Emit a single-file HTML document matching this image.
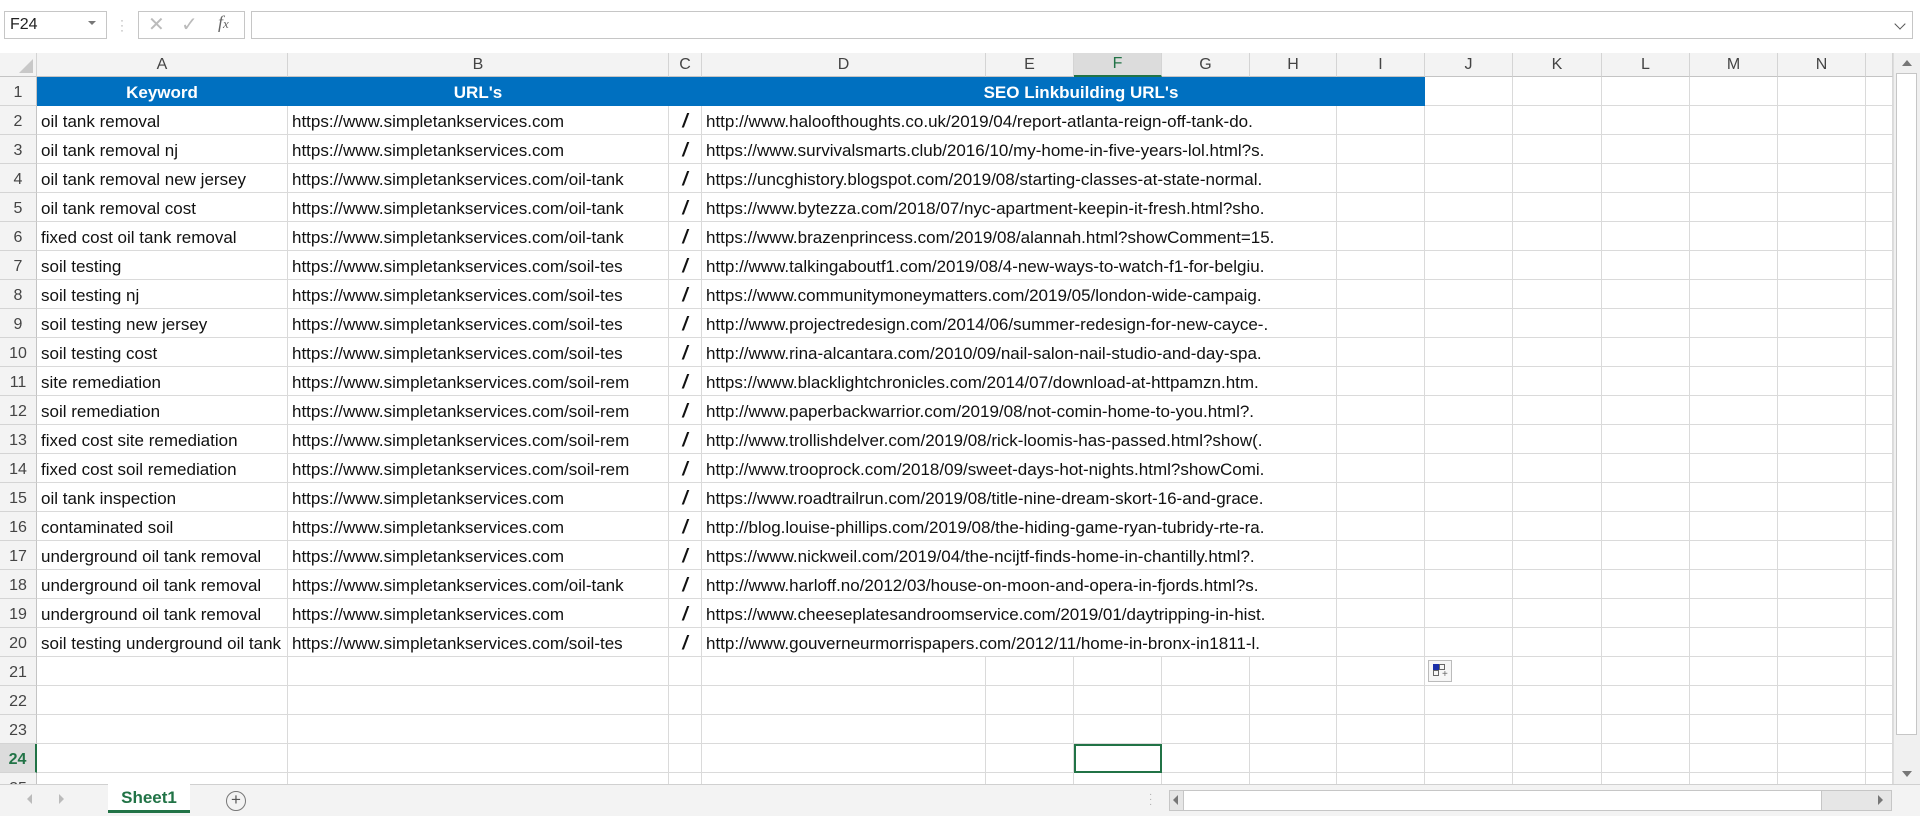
<!DOCTYPE html>
<html><head><meta charset="utf-8"><style>
*{box-sizing:border-box;margin:0;padding:0}
body{width:1920px;height:816px;overflow:hidden;background:#fff;font-family:"Liberation Sans",sans-serif;position:relative}
.abs{position:absolute}
table{border-collapse:separate;border-spacing:0;table-layout:fixed;position:absolute;left:0;top:53px}
td{border-right:1px solid #dadada;border-bottom:1px solid #dadada;height:29px;white-space:nowrap;overflow:hidden;font-size:17px;color:#111;padding:4px 0 0 4px;vertical-align:middle}
tr.h td{height:24px;background:#f3f3f3;border-right:1px solid #d4d4d4;border-bottom:1px solid #c4c4c4;text-align:center;color:#444;font-size:16px;padding:0}
td.rh{background:#f3f3f3;text-align:center;color:#444;font-size:16px;padding:3px 0 0 0;border-right:1px solid #c4c4c4;border-bottom:1px solid #d4d4d4}
tr.b td.bl{background:#0070c0;color:#fff;font-weight:bold;text-align:center;border-color:#0070c0;padding:3px 0 0 0}
td.sl{text-align:center;font-weight:bold;font-style:italic;padding:3px 0 0 0;font-size:19px}
</style></head><body>
<div class="abs" style="left:0;top:0;width:1920px;height:53px;background:#fff"></div>
<div class="abs" style="left:4px;top:11px;width:103px;height:28px;border:1px solid #c6c6c6;font-size:16px;padding:4px 0 0 5px;color:#222">F24</div>
<div class="abs" style="left:88px;top:21px;width:0;height:0;border-left:4px solid transparent;border-right:4px solid transparent;border-top:4px solid #777"></div>
<div class="abs" style="left:120px;top:18px;color:#aaa;font-size:12px;line-height:5px">·<br>·<br>·</div>
<div class="abs" style="left:138px;top:11px;width:107px;height:28px;border:1px solid #c6c6c6"></div>
<div class="abs" style="left:148px;top:12px;color:#bbb;font-size:20px">✕</div>
<div class="abs" style="left:181px;top:12px;color:#bbb;font-size:20px">✓</div>
<div class="abs" style="left:218px;top:12px;color:#666;font-size:18px;font-style:italic;font-family:'Liberation Serif',serif">f<span style="font-size:13px">x</span></div>
<div class="abs" style="left:251px;top:11px;width:1662px;height:28px;border:1px solid #c6c6c6"></div>
<div class="abs" style="left:1896px;top:20px;width:8px;height:8px;border-right:1.5px solid #555;border-bottom:1.5px solid #555;transform:rotate(45deg)"></div>

<div class="abs" style="left:0;top:53px;width:1893px;height:731px;overflow:hidden">
<table style="top:0">
<colgroup><col style="width:37px"><col style="width:251px"><col style="width:381px"><col style="width:33px"><col style="width:284px"><col style="width:88px"><col style="width:88px"><col style="width:88px"><col style="width:87px"><col style="width:88px"><col style="width:88px"><col style="width:89px"><col style="width:88px"><col style="width:88px"><col style="width:88px"><col style="width:27px"></colgroup>
<tr class="h"><td style="position:relative"><div style="position:absolute;right:3px;bottom:3px;width:0;height:0;border-left:14px solid transparent;border-bottom:14px solid #c8c8c8"></div></td><td>A</td><td>B</td><td>C</td><td>D</td><td>E</td><td style="background:#dcdcdc;border-bottom:2px solid #217346;color:#217346">F</td><td>G</td><td>H</td><td>I</td><td>J</td><td>K</td><td>L</td><td>M</td><td>N</td><td></td></tr>
<tr class="b"><td class="rh">1</td><td class="bl">Keyword</td><td class="bl">URL's</td><td class="bl"></td><td class="bl" colspan="6" style="padding-left:36px">SEO Linkbuilding URL's</td><td></td><td></td><td></td><td></td><td></td><td></td></tr>
<tr><td class="rh">2</td><td>oil tank removal</td><td>https://www.simpletankservices.com</td><td class="sl">/</td><td colspan="5">http://www.haloofthoughts.co.uk/2019/04/report-atlanta-reign-off-tank-do.</td><td></td><td></td><td></td><td></td><td></td><td></td><td></td></tr>
<tr><td class="rh">3</td><td>oil tank removal nj</td><td>https://www.simpletankservices.com</td><td class="sl">/</td><td colspan="5">https://www.survivalsmarts.club/2016/10/my-home-in-five-years-lol.html?s.</td><td></td><td></td><td></td><td></td><td></td><td></td><td></td></tr>
<tr><td class="rh">4</td><td>oil tank removal new jersey</td><td>https://www.simpletankservices.com/oil-tank</td><td class="sl">/</td><td colspan="5">https://uncghistory.blogspot.com/2019/08/starting-classes-at-state-normal.</td><td></td><td></td><td></td><td></td><td></td><td></td><td></td></tr>
<tr><td class="rh">5</td><td>oil tank removal cost</td><td>https://www.simpletankservices.com/oil-tank</td><td class="sl">/</td><td colspan="5">https://www.bytezza.com/2018/07/nyc-apartment-keepin-it-fresh.html?sho.</td><td></td><td></td><td></td><td></td><td></td><td></td><td></td></tr>
<tr><td class="rh">6</td><td>fixed cost oil tank removal</td><td>https://www.simpletankservices.com/oil-tank</td><td class="sl">/</td><td colspan="5">https://www.brazenprincess.com/2019/08/alannah.html?showComment=15.</td><td></td><td></td><td></td><td></td><td></td><td></td><td></td></tr>
<tr><td class="rh">7</td><td>soil testing</td><td>https://www.simpletankservices.com/soil-tes</td><td class="sl">/</td><td colspan="5">http://www.talkingaboutf1.com/2019/08/4-new-ways-to-watch-f1-for-belgiu.</td><td></td><td></td><td></td><td></td><td></td><td></td><td></td></tr>
<tr><td class="rh">8</td><td>soil testing nj</td><td>https://www.simpletankservices.com/soil-tes</td><td class="sl">/</td><td colspan="5">https://www.communitymoneymatters.com/2019/05/london-wide-campaig.</td><td></td><td></td><td></td><td></td><td></td><td></td><td></td></tr>
<tr><td class="rh">9</td><td>soil testing new jersey</td><td>https://www.simpletankservices.com/soil-tes</td><td class="sl">/</td><td colspan="5">http://www.projectredesign.com/2014/06/summer-redesign-for-new-cayce-.</td><td></td><td></td><td></td><td></td><td></td><td></td><td></td></tr>
<tr><td class="rh">10</td><td>soil testing cost</td><td>https://www.simpletankservices.com/soil-tes</td><td class="sl">/</td><td colspan="5">http://www.rina-alcantara.com/2010/09/nail-salon-nail-studio-and-day-spa.</td><td></td><td></td><td></td><td></td><td></td><td></td><td></td></tr>
<tr><td class="rh">11</td><td>site remediation</td><td>https://www.simpletankservices.com/soil-rem</td><td class="sl">/</td><td colspan="5">https://www.blacklightchronicles.com/2014/07/download-at-httpamzn.htm.</td><td></td><td></td><td></td><td></td><td></td><td></td><td></td></tr>
<tr><td class="rh">12</td><td>soil remediation</td><td>https://www.simpletankservices.com/soil-rem</td><td class="sl">/</td><td colspan="5">http://www.paperbackwarrior.com/2019/08/not-comin-home-to-you.html?.</td><td></td><td></td><td></td><td></td><td></td><td></td><td></td></tr>
<tr><td class="rh">13</td><td>fixed cost site remediation</td><td>https://www.simpletankservices.com/soil-rem</td><td class="sl">/</td><td colspan="5">http://www.trollishdelver.com/2019/08/rick-loomis-has-passed.html?show(.</td><td></td><td></td><td></td><td></td><td></td><td></td><td></td></tr>
<tr><td class="rh">14</td><td>fixed cost soil remediation</td><td>https://www.simpletankservices.com/soil-rem</td><td class="sl">/</td><td colspan="5">http://www.trooprock.com/2018/09/sweet-days-hot-nights.html?showComi.</td><td></td><td></td><td></td><td></td><td></td><td></td><td></td></tr>
<tr><td class="rh">15</td><td>oil tank inspection</td><td>https://www.simpletankservices.com</td><td class="sl">/</td><td colspan="5">https://www.roadtrailrun.com/2019/08/title-nine-dream-skort-16-and-grace.</td><td></td><td></td><td></td><td></td><td></td><td></td><td></td></tr>
<tr><td class="rh">16</td><td>contaminated soil</td><td>https://www.simpletankservices.com</td><td class="sl">/</td><td colspan="5">http://blog.louise-phillips.com/2019/08/the-hiding-game-ryan-tubridy-rte-ra.</td><td></td><td></td><td></td><td></td><td></td><td></td><td></td></tr>
<tr><td class="rh">17</td><td>underground oil tank removal</td><td>https://www.simpletankservices.com</td><td class="sl">/</td><td colspan="5">https://www.nickweil.com/2019/04/the-ncijtf-finds-home-in-chantilly.html?.</td><td></td><td></td><td></td><td></td><td></td><td></td><td></td></tr>
<tr><td class="rh">18</td><td>underground oil tank removal</td><td>https://www.simpletankservices.com/oil-tank</td><td class="sl">/</td><td colspan="5">http://www.harloff.no/2012/03/house-on-moon-and-opera-in-fjords.html?s.</td><td></td><td></td><td></td><td></td><td></td><td></td><td></td></tr>
<tr><td class="rh">19</td><td>underground oil tank removal</td><td>https://www.simpletankservices.com</td><td class="sl">/</td><td colspan="5">https://www.cheeseplatesandroomservice.com/2019/01/daytripping-in-hist.</td><td></td><td></td><td></td><td></td><td></td><td></td><td></td></tr>
<tr><td class="rh">20</td><td>soil testing underground oil tank</td><td>https://www.simpletankservices.com/soil-tes</td><td class="sl">/</td><td colspan="5">http://www.gouverneurmorrispapers.com/2012/11/home-in-bronx-in1811-l.</td><td></td><td></td><td></td><td></td><td></td><td></td><td></td></tr>
<tr><td class="rh">21</td><td></td><td></td><td></td><td></td><td></td><td></td><td></td><td></td><td></td><td></td><td></td><td></td><td></td><td></td><td></td></tr>
<tr><td class="rh">22</td><td></td><td></td><td></td><td></td><td></td><td></td><td></td><td></td><td></td><td></td><td></td><td></td><td></td><td></td><td></td></tr>
<tr><td class="rh">23</td><td></td><td></td><td></td><td></td><td></td><td></td><td></td><td></td><td></td><td></td><td></td><td></td><td></td><td></td><td></td></tr>
<tr><td class="rh" style="background:#dcdcdc;color:#217346;font-weight:bold;border-right:2px solid #217346">24</td><td></td><td></td><td></td><td></td><td></td><td style="outline:2px solid #217346;outline-offset:-2px"></td><td></td><td></td><td></td><td></td><td></td><td></td><td></td><td></td><td></td></tr>
<tr><td class="rh">25</td><td></td><td></td><td></td><td></td><td></td><td></td><td></td><td></td><td></td><td></td><td></td><td></td><td></td><td></td><td></td></tr>
</table>
</div>
<div class="abs" style="left:1428px;top:660px;width:24px;height:22px;border:1px solid #bbb;background:#f6f6f6">
<div class="abs" style="left:4px;top:3px;width:6px;height:6px;background:#1a2ea8"></div>
<div class="abs" style="left:10px;top:3px;width:6px;height:6px;border:1px solid #666"></div>
<div class="abs" style="left:4px;top:9px;width:6px;height:6px;border:1px solid #666"></div>
<div class="abs" style="left:13px;top:8px;font-size:10px;color:#666">+</div>
</div>
<div class="abs" style="left:1893px;top:53px;width:27px;height:731px;background:#f0f0f0;border-left:1px solid #ddd"></div>
<div class="abs" style="left:1902px;top:60px;width:0;height:0;border-left:5px solid transparent;border-right:5px solid transparent;border-bottom:6px solid #777"></div>
<div class="abs" style="left:1896px;top:73px;width:21px;height:662px;background:#fff;border:1px solid #c6c6c6"></div>
<div class="abs" style="left:1902px;top:771px;width:0;height:0;border-left:5px solid transparent;border-right:5px solid transparent;border-top:6px solid #777"></div>
<div class="abs" style="left:0;top:784px;width:1920px;height:32px;background:#f3f3f3;border-top:1px solid #d0d0d0"></div>
<div class="abs" style="left:27px;top:794px;width:0;height:0;border-top:5px solid transparent;border-bottom:5px solid transparent;border-right:5px solid #bbb"></div>
<div class="abs" style="left:59px;top:794px;width:0;height:0;border-top:5px solid transparent;border-bottom:5px solid transparent;border-left:5px solid #bbb"></div>
<div class="abs" style="left:108px;top:784px;width:82px;height:29px;background:#fff;border-bottom:3px solid #217346;color:#217346;font-weight:bold;font-size:17px;text-align:center;padding-top:4px">Sheet1</div>
<div class="abs" style="left:226px;top:791px;width:20px;height:20px;border:1.5px solid #777;border-radius:50%;text-align:center;line-height:16px;color:#555;font-size:17px">+</div>
<div class="abs" style="left:1149px;top:792px;color:#aaa;font-size:10px;line-height:5px">·<br>·<br>·</div>
<div class="abs" style="left:1169px;top:790px;width:723px;height:21px;background:#e6e6e6;border:1px solid #c6c6c6"></div>
<div class="abs" style="left:1183px;top:791px;width:639px;height:19px;background:#fff;border-left:1px solid #c6c6c6;border-right:1px solid #c6c6c6"></div>
<div class="abs" style="left:1173px;top:795px;width:0;height:0;border-top:5px solid transparent;border-bottom:5px solid transparent;border-right:5px solid #777"></div>
<div class="abs" style="left:1878px;top:795px;width:0;height:0;border-top:5px solid transparent;border-bottom:5px solid transparent;border-left:5px solid #777"></div>
</body></html>
